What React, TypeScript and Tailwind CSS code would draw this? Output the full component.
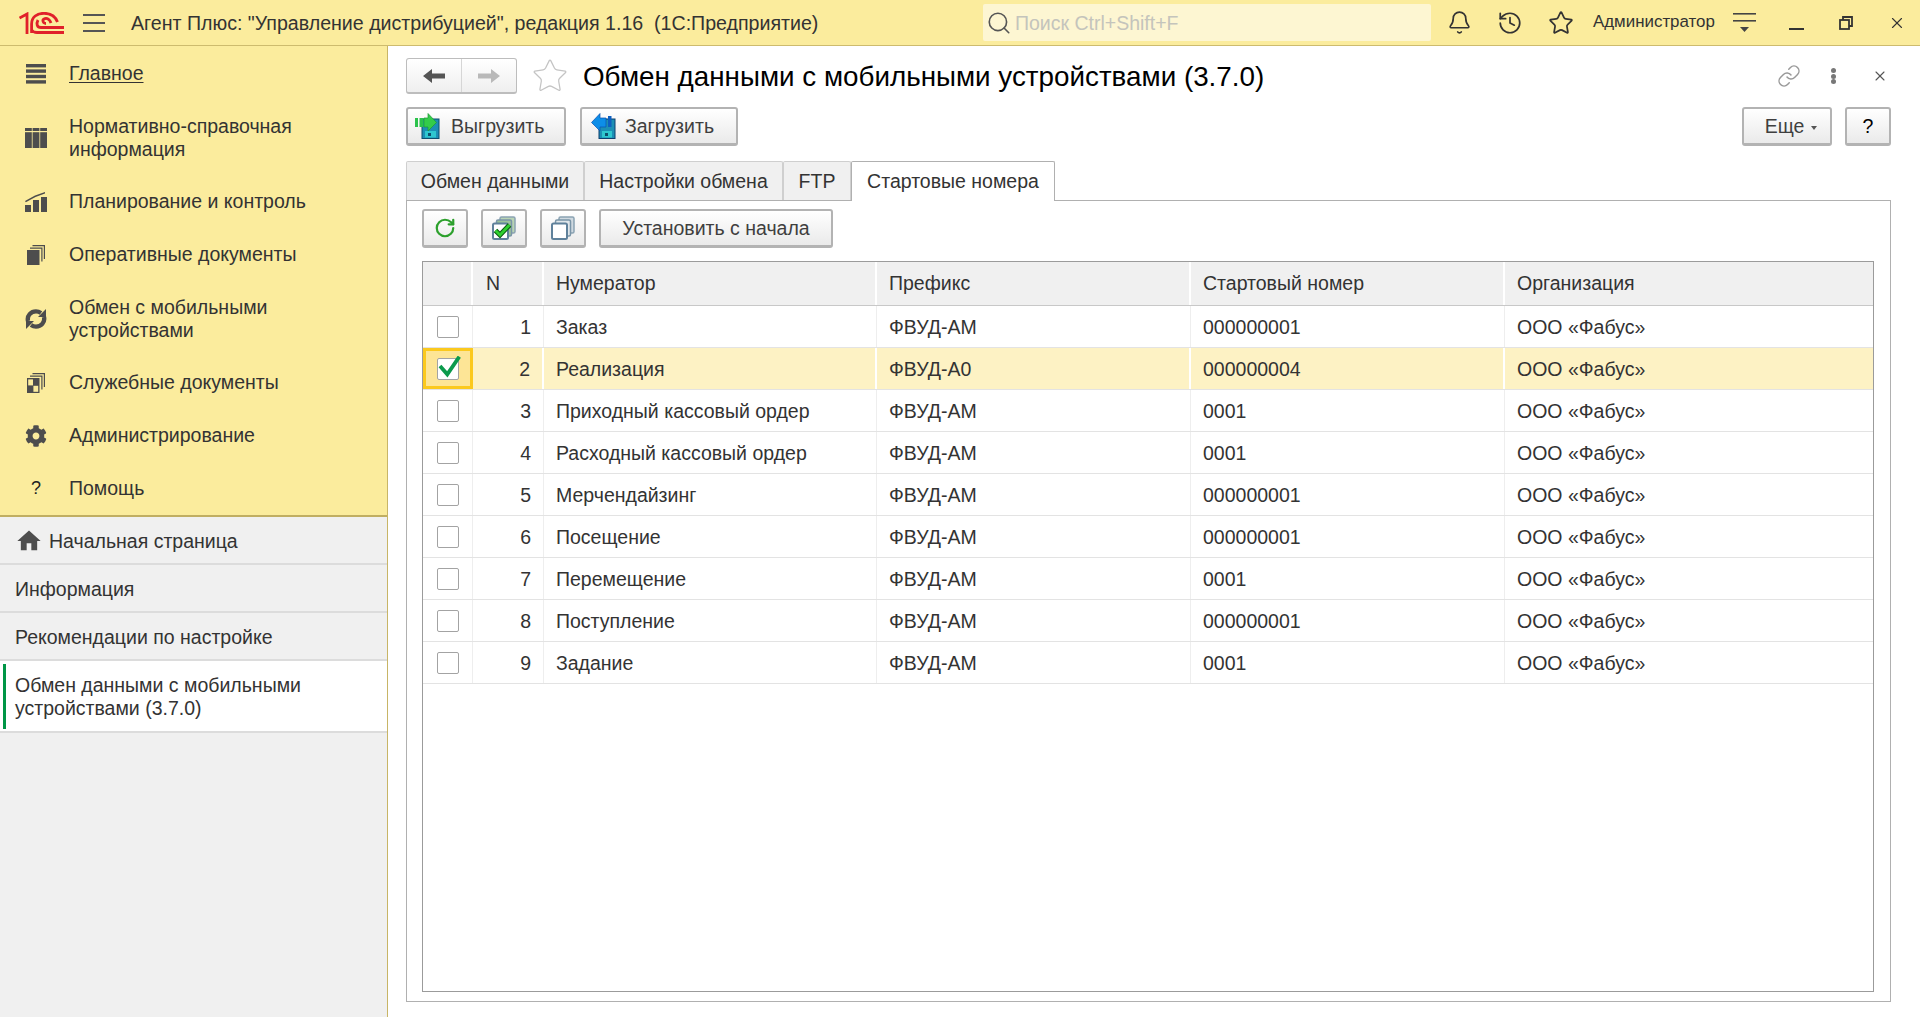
import React from "react";
import { Bell, History, Link, RotateCw, Search, Star, X } from "lucide-react";
import { FaCog } from "react-icons/fa";
import { MdHome } from "react-icons/md";

const font = "[font-family:'Liberation_Sans',Arial,sans-serif]";

function Logo() {
  return (
    <svg width="45" height="22" viewBox="0 0 45 22" fill="none" stroke="#e0202a" strokeWidth="2.8" className="shrink-0">
      <path d="M0.5 6 L8 2 V22" />
      <path d="M12.6 21 V12 C12.6 5 18 1.3 25 1.3 C33 1.3 37 6 38.5 10" />
      <path d="M27 11.5 C24 11.5 23 8 25 7 C28 5 31 8 32 11" />
      <path d="M19 8 C17 12 18 15.5 22 15.5 H45" />
      <path d="M12.6 18 C14 20 16 20.5 18 20.5 H45" />
    </svg>
  );
}

function MainIcon() {
  return (
    <svg width="22" height="22" viewBox="0 0 22 22" fill="#4d4d4d">
      <rect x="1" y="1" width="20" height="3.4" />
      <rect x="1" y="6.4" width="20" height="3.4" />
      <rect x="1" y="11.8" width="20" height="3.4" />
      <rect x="1" y="17.2" width="20" height="3.4" />
    </svg>
  );
}

function BooksIcon() {
  return (
    <svg width="22" height="20" viewBox="0 0 22 20" fill="#4d4d4d">
      <rect x="0" y="0" width="6.8" height="3" />
      <rect x="7.6" y="0" width="6.8" height="3" />
      <rect x="15.2" y="0" width="6.8" height="3" />
      <rect x="0" y="4.2" width="6.8" height="15.8" />
      <rect x="7.6" y="4.2" width="6.8" height="15.8" />
      <rect x="15.2" y="4.2" width="6.8" height="15.8" />
    </svg>
  );
}

function PlanIcon() {
  return (
    <svg width="22" height="20" viewBox="0 0 22 20" fill="#4d4d4d">
      <path d="M0 9 L10 3.6 L20 0 L20 1.6 L10.5 5 L0.8 10.2 Z" />
      <rect x="0" y="13" width="6" height="7" />
      <rect x="8" y="8" width="6" height="12" />
      <rect x="16" y="5" width="6" height="15" />
    </svg>
  );
}

function DocsIcon({ service }: { service?: boolean }) {
  return (
    <svg width="18" height="20" viewBox="0 0 18 20">
      <path d="M5.5 0 H18 V14 H16.8 V1.2 H5.5 Z" fill="#4d4d4d" />
      <path d="M3 2.5 H15.5 V16.5 H14.3 V3.7 H3 Z" fill="#4d4d4d" />
      <rect x="0" y="5" width="12.5" height="15" fill="#4d4d4d" />
      {service && (
        <>
          <rect x="1.2" y="6.4" width="4.8" height="6" fill="#fbec9d" />
          <rect x="6.4" y="12.8" width="4.8" height="6" fill="#fbec9d" />
        </>
      )}
    </svg>
  );
}

function SyncIcon() {
  return (
    <svg width="22" height="22" viewBox="0 0 22 22" fill="none">
      <path d="M3 13 C1.8 7.5 6 3.4 11 3.4 C13 3.4 14.5 4 16 5" stroke="#4d4d4d" strokeWidth="4.4" />
      <path d="M19 9 C20.2 14.5 16 18.6 11 18.6 C9 18.6 7.5 18 6 17" stroke="#4d4d4d" strokeWidth="4.4" />
      <path d="M13 9 H21 V1 Z" fill="#4d4d4d" />
      <path d="M9 13 H1 V21 Z" fill="#4d4d4d" />
    </svg>
  );
}

function ArrowIcon({ dir, color }: { dir: "left" | "right"; color: string }) {
  return (
    <svg width="22" height="16" viewBox="0 0 22 16" fill={color} className={dir === "right" ? "-scale-x-100" : ""}>
      <path d="M0 8 L9 1 V5.5 H22 V10.5 H9 V15 Z" />
    </svg>
  );
}

function UploadIcon() {
  return (
    <svg width="26" height="26" viewBox="0 0 26 26" className="shrink-0">
      <rect x="7" y="6" width="17" height="19.5" fill="#1c8fb5" stroke="#0d4f6e" strokeWidth="1" />
      <rect x="10" y="18" width="11" height="6.5" fill="#2fc7cf" />
      <rect x="13" y="20" width="3" height="3" fill="#0d4f6e" />
      <rect x="0" y="5" width="3" height="9" fill="#2bc24b" />
      <rect x="4.5" y="5" width="4" height="9" fill="#2bc24b" />
      <path d="M9 5 H13 V0.5 L21.5 9.5 L13 18 V14 H9 Z" fill="#33cc4a" stroke="#1d9a33" strokeWidth="0.7" />
    </svg>
  );
}

function DownloadIcon() {
  return (
    <svg width="26" height="26" viewBox="0 0 26 26" className="shrink-0">
      <rect x="8" y="6" width="16" height="19.5" fill="#1c8fb5" stroke="#0d3f6e" strokeWidth="1" />
      <rect x="11" y="18" width="10" height="6.5" fill="#2fc7cf" />
      <rect x="14" y="20" width="3" height="3" fill="#0d4f6e" />
      <rect x="17" y="3" width="3.5" height="11" fill="#0d5fc0" />
      <path d="M15 5 H9 V0.5 L0.5 9.5 L9 18 V14 H15 Z" fill="#0d8ee8" stroke="#0a50b0" strokeWidth="0.7" />
    </svg>
  );
}

function StackIcon({ checked }: { checked?: boolean }) {
  return (
    <svg width="24" height="24" viewBox="0 0 24 24" fill="none" className="shrink-0">
      <rect x="8" y="1" width="15" height="16" rx="1.5" fill={checked ? "#b9d4b4" : "#cfd9e0"} stroke="#8ba3b3" strokeWidth="1.5" />
      <rect x="4.5" y="4" width="15" height="16" rx="1.5" fill={checked ? "#9cc29a" : "#dfe6ea"} stroke="#7a95a8" strokeWidth="1.5" />
      <rect x="1" y="7.5" width="15" height="15.5" rx="1.5" fill="#fff" stroke="#5f819b" strokeWidth="2" />
      {checked && (
        <>
          <path d="M3.5 14.5 L8 19 L17.5 9" stroke="#0d5c14" strokeWidth="5" />
          <path d="M3.5 14.5 L8 19 L17.5 9" stroke="#2fd02f" strokeWidth="2.8" />
        </>
      )}
    </svg>
  );
}

function Btn({ children, className = "" }: { children: React.ReactNode; className?: string }) {
  return (
    <div
      className={`flex h-[39px] items-center rounded-[3px] border-2 border-[#b3b3b3] border-b-[3px] bg-linear-to-b from-white to-[#eaeaea] text-[19.5px] text-[#3f3f3f] ${className}`}
    >
      {children}
    </div>
  );
}

const menu = [
  { label: "Главное", icon: <MainIcon />, underline: true },
  { label: "Нормативно-справочная информация", icon: <BooksIcon />, tall: true },
  { label: "Планирование и контроль", icon: <PlanIcon /> },
  { label: "Оперативные документы", icon: <DocsIcon /> },
  { label: "Обмен с мобильными устройствами", icon: <SyncIcon />, tall: true },
  { label: "Служебные документы", icon: <DocsIcon service /> },
  { label: "Администрирование", icon: <FaCog size={22} color="#4d4d4d" /> },
  { label: "Помощь", icon: <span className="text-[18px] text-[#222]">?</span> },
];

const rows = [
  ["1", "Заказ", "ФВУД-АМ", "000000001"],
  ["2", "Реализация", "ФВУД-А0", "000000004"],
  ["3", "Приходный кассовый ордер", "ФВУД-АМ", "0001"],
  ["4", "Расходный кассовый ордер", "ФВУД-АМ", "0001"],
  ["5", "Мерчендайзинг", "ФВУД-АМ", "000000001"],
  ["6", "Посещение", "ФВУД-АМ", "000000001"],
  ["7", "Перемещение", "ФВУД-АМ", "0001"],
  ["8", "Поступление", "ФВУД-АМ", "000000001"],
  ["9", "Задание", "ФВУД-АМ", "0001"],
];

export default function App() {
  return (
    <div className={`flex h-[1017px] w-[1920px] flex-col overflow-hidden bg-white ${font} text-[19.5px] leading-[23px] text-[#333]`}>
      <header className="flex h-[46px] shrink-0 items-center border-b border-[#cdbb6e] bg-[#fbec9d]">
        <div className="ml-[19px]">
          <Logo />
        </div>
        <div className="ml-[19px] flex h-[18px] w-[22px] flex-col justify-between">
          <div className="h-[2px] bg-[#555]" />
          <div className="h-[2px] bg-[#555]" />
          <div className="h-[2px] bg-[#555]" />
        </div>
        <div className="ml-[26px] w-[852px] pt-px text-[19.6px] whitespace-nowrap">
          Агент Плюс: "Управление дистрибуцией", редакция 1.16&nbsp; (1С:Предприятие)
        </div>
        <div className="flex h-[37px] w-[448px] items-center rounded-[2px] bg-[#fdf6d2] pl-[3px] text-[#c4c4bc]">
          <Search size={26} strokeWidth={1.5} color="#555" />
          <span className="ml-[3px] pt-px">Поиск Ctrl+Shift+F</span>
        </div>
        <Bell size={25} strokeWidth={1.6} color="#333" className="ml-[16px]" />
        <History size={26} strokeWidth={1.6} color="#333" className="ml-[25px]" />
        <Star size={26} strokeWidth={1.6} color="#333" className="ml-[25px]" />
        <span className="ml-[19px] -translate-y-px text-[16.9px] whitespace-nowrap">Администратор</span>
        <svg width="23" height="20" viewBox="0 0 23 20" className="ml-[18px]">
          <rect x="0" y="0" width="23" height="1.6" fill="#444" />
          <rect x="0" y="7" width="23" height="1.6" fill="#444" />
          <path d="M7 14 H16 L11.5 19 Z" fill="#444" />
        </svg>
        <div className="mt-[12px] ml-[33px] h-[2px] w-[15px] bg-[#333]" />
        <svg width="14" height="14" viewBox="0 0 14 14" fill="none" stroke="#333" strokeWidth="1.8" className="ml-[35px]">
          <rect x="1" y="4" width="9" height="9" />
          <path d="M4 4 V1 H13 V10 H10" />
        </svg>
        <X size={18} strokeWidth={1.5} color="#333" className="ml-[35px]" />
      </header>

      <div className="flex min-h-0 flex-1">
        <aside className="flex w-[388px] shrink-0 flex-col border-r border-[#c8b566] bg-[#f0f0f0]">
          <nav className="border-b-2 border-[#c0ae62] bg-[#fbec9d] pt-px">
            {menu.map((item) => (
              <div key={item.label} className={`flex items-center ${item.tall ? "h-[75px]" : "h-[53px]"}`}>
                <div className="flex w-[69px] shrink-0 justify-center pl-[3px]">{item.icon}</div>
                <span className={`w-[290px] ${item.underline ? "underline underline-offset-2" : ""}`}>{item.label}</span>
              </div>
            ))}
          </nav>
          <div className="flex h-[48px] items-center border-b-2 border-[#dcdcdc] pt-[2px] pl-[15px]">
            <MdHome size={28} color="#4d4d4d" />
            <span className="ml-[6px]">Начальная страница</span>
          </div>
          <div className="flex h-[48px] items-center border-b-2 border-[#dcdcdc] pt-[2px] pl-[15px]">Информация</div>
          <div className="flex h-[48px] items-center border-b-2 border-[#dcdcdc] pt-[2px] pl-[15px]">Рекомендации по настройке</div>
          <div className="flex h-[72px] items-center border-b-2 border-[#dcdcdc] bg-white pl-[3px]">
            <div className="h-[65px] w-[3px] bg-[#009646]" />
            <div className="ml-[9px] w-[340px] pt-[2px]">Обмен данными с мобильными устройствами (3.7.0)</div>
          </div>
        </aside>

        <main className="flex min-w-0 flex-1 flex-col pt-[12px] pr-[29px] pb-[15px] pl-[18px]">
          <div className="flex h-[36px] items-center">
            <div className="flex h-[36px] w-[111px] rounded-[3px] border border-[#bdbdbd] border-b-2 bg-linear-to-b from-white to-[#efefef]">
              <div className="flex w-[55px] items-center justify-center border-r border-[#d6d6d6]">
                <ArrowIcon dir="left" color="#555" />
              </div>
              <div className="flex flex-1 items-center justify-center">
                <ArrowIcon dir="right" color="#b9b9b9" />
              </div>
            </div>
            <Star size={38} strokeWidth={0.8} color="#c4c4c4" className="ml-[14px]" />
            <h1 className="ml-[14px] pt-[2px] text-[27.8px] leading-[36px] font-normal text-black">
              Обмен данными с мобильными устройствами (3.7.0)
            </h1>
            <div className="ml-auto flex items-center">
              <Link size={24} strokeWidth={1.5} color="#999" />
              <div className="ml-[30px] flex h-[16px] flex-col justify-between">
                <div className="size-[5px] rounded-full bg-[#777]" />
                <div className="size-[5px] rounded-full bg-[#777]" />
                <div className="size-[5px] rounded-full bg-[#777]" />
              </div>
              <X size={16} strokeWidth={1.6} color="#555" className="mr-[3px] ml-[36px]" />
            </div>
          </div>

          <div className="mt-[13px] flex">
            <Btn className="w-[160px] gap-[10px] pl-[7px]">
              <UploadIcon />
              Выгрузить
            </Btn>
            <Btn className="ml-[14px] w-[158px] gap-[8px] pl-[9px]">
              <DownloadIcon />
              Загрузить
            </Btn>
            <Btn className="ml-auto w-[90px] justify-center gap-[7px] pl-[8px]">
              Еще
              <span className="mt-[3px] border-x-[3px] border-t-[4px] border-x-transparent border-t-[#555]" />
            </Btn>
            <Btn className="ml-[13px] w-[46px] justify-center text-black">?</Btn>
          </div>

          <div className="mt-[15px] flex h-[39px] shrink-0">
            {[
              ["Обмен данными", "w-[178px]"],
              ["Настройки обмена", "w-[199px]"],
              ["FTP", "w-[68px]"],
            ].map(([label, w]) => (
              <div key={label} className={`flex ${w} items-center justify-center rounded-t-[2px] border border-b-0 border-[#cfcfcf] bg-[#f0f0f0]`}>
                {label}
              </div>
            ))}
            <div className="z-10 flex h-[40px] w-[204px] items-center justify-center rounded-t-[2px] border border-b-0 border-[#b0b0b0] bg-white pb-px">
              Стартовые номера
            </div>
          </div>

          <section className="flex min-h-0 flex-1 flex-col border border-[#b0b0b0] pt-[8px] pr-[16px] pb-[9px] pl-[15px]">
            <div className="flex h-[39px] shrink-0">
              <Btn className="w-[46px] justify-center">
                <RotateCw size={22} strokeWidth={2.4} color="#2ca02c" />
              </Btn>
              <Btn className="ml-[13px] w-[46px] justify-center">
                <StackIcon checked />
              </Btn>
              <Btn className="ml-[13px] w-[46px] justify-center">
                <StackIcon />
              </Btn>
              <Btn className="ml-[13px] w-[234px] justify-center">Установить с начала</Btn>
            </div>

            <div className="mt-[13px] min-h-0 flex-1 border border-[#9b9b9b]">
              <div className="flex h-[44px] border-b border-[#c8c8c8] bg-[#f0f0f0]">
                <div className="w-[50px] border-r-2 border-white" />
                <div className="flex w-[71px] items-center border-r-2 border-white pl-[13px]">N</div>
                <div className="flex w-[333px] items-center border-r-2 border-white pl-[12px]">Нумератор</div>
                <div className="flex w-[314px] items-center border-r-2 border-white pl-[12px]">Префикс</div>
                <div className="flex w-[314px] items-center border-r-2 border-white pl-[12px]">Стартовый номер</div>
                <div className="flex flex-1 items-center pl-[12px]">Организация</div>
              </div>
              {rows.map((row) => {
                const selected = row[0] === "2";
                const line = selected ? "border-r-2 border-white" : "border-r border-[#eeeeee]";
                return (
                  <div key={row[0]} className={`flex h-[42px] border-b border-[#e3e3e3] ${selected ? "bg-[#fdf2c4]" : ""}`}>
                    <div
                      className={`flex w-[50px] items-center justify-center ${
                        selected ? "border-[3px] border-[#fbc91e] bg-[#fde596]" : "border-r border-[#eeeeee]"
                      }`}
                    >
                      <div className="relative size-[22px] rounded-[2px] border border-[#a3a3a3] bg-white">
                        {selected && (
                          <svg width="26" height="22" viewBox="0 0 26 22" fill="none" className="absolute -top-[3px] -left-[1px]">
                            <path d="M3 10 L10.3 18.3 L22.3 0.7" stroke="#0b9a4c" strokeWidth="3.8" />
                          </svg>
                        )}
                      </div>
                    </div>
                    <div className={`flex w-[71px] items-center justify-end pt-[2px] pr-[12px] ${line}`}>{row[0]}</div>
                    <div className={`flex w-[333px] items-center pt-[2px] pl-[12px] ${line}`}>{row[1]}</div>
                    <div className={`flex w-[314px] items-center pt-[2px] pl-[12px] ${line}`}>{row[2]}</div>
                    <div className={`flex w-[314px] items-center pt-[2px] pl-[12px] ${line}`}>{row[3]}</div>
                    <div className="flex flex-1 items-center pt-[2px] pl-[12px]">ООО «Фабус»</div>
                  </div>
                );
              })}
            </div>
          </section>
        </main>
      </div>
    </div>
  );
}
